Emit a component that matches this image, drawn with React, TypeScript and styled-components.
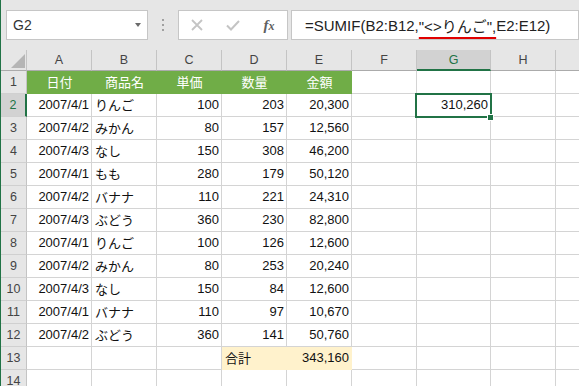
import * as React from 'react';
import styled, { createGlobalStyle } from 'styled-components';

const GREEN = '#217346';
const GRID = '#d4d4d4';

const GlobalStyle = createGlobalStyle`
    body {
        margin: 0;
    }
`;

const Window = styled.div`
    width: 579px;
    height: 386px;
    overflow: hidden;
    box-sizing: border-box;
    border-left: 1px solid ${GREEN};
    background: #e6e6e6;
    font-family: 'Liberation Sans', 'Noto Sans CJK JP', sans-serif;
`;

const FormulaBar = styled.div`
    display: flex;
    height: 50px;
    box-sizing: border-box;
    padding: 10px 0 0 5px;
`;

const NameBox = styled.div`
    width: 142px;
    height: 30px;
    box-sizing: border-box;
    border: 1px solid #c6c6c6;
    background: #fff;
    display: flex;
    align-items: center;
    justify-content: space-between;
    padding: 0 6px;
    font-size: 14px;
    color: #333;
`;

const DropArrow = styled.span`
    width: 0;
    height: 0;
    border-left: 3.5px solid transparent;
    border-right: 3.5px solid transparent;
    border-top: 4px solid #6a6a6a;
`;

const Grip = styled.div`
    width: 30px;
    height: 30px;
    display: flex;
    flex-direction: column;
    align-items: center;
    justify-content: center;
    gap: 3px;

    > span {
        width: 2px;
        height: 2px;
        background: #a0a0a0;
    }
`;

const ButtonBox = styled.div`
    width: 110px;
    height: 30px;
    box-sizing: border-box;
    border: 1px solid #c6c6c6;
    background: #fff;
    display: flex;
`;

const BarButton = styled.div`
    width: 36px;
    display: flex;
    align-items: center;
    justify-content: center;
`;

const Fx = styled.span`
    font-family: 'Liberation Serif', serif;
    font-style: italic;
    font-weight: bold;
    font-size: 15px;
    color: #606060;

    > small {
        font-size: 12px;
    }
`;

const FormulaBox = styled.div`
    flex: 1;
    margin-left: 3px;
    height: 30px;
    box-sizing: border-box;
    border: 1px solid #c6c6c6;
    background: #fff;
    display: flex;
    align-items: center;
    padding-left: 13px;
    font-size: 15px;
    color: #222;
    white-space: nowrap;
`;

const Marked = styled.span`
    text-decoration: underline;
    text-decoration-color: #e00000;
    text-decoration-thickness: 2px;
    text-underline-offset: 5px;
`;

const Sheet = styled.div`
    display: grid;
    grid-template-columns: 26px repeat(6, 65px) 74px 65px 65px;
    grid-template-rows: 21px repeat(14, 23px);
    font-size: 13px;
`;

const Corner = styled.div`
    box-sizing: border-box;
    border-right: 1px solid #c4c4c4;
    border-bottom: 1px solid #ababab;
    display: flex;
    align-items: flex-end;
    justify-content: flex-end;
    padding: 0 1px 2px 0;

    > span {
        width: 14px;
        height: 14px;
        background: #b5b5b5;
        clip-path: polygon(100% 0, 100% 100%, 0 100%);
    }
`;

const ColHeader = styled.div<{ $active?: boolean }>`
    box-sizing: border-box;
    display: flex;
    align-items: center;
    justify-content: center;
    font-size: 12.5px;
    background: ${(p) => (p.$active ? '#d2d2d2' : '#e6e6e6')};
    color: ${(p) => (p.$active ? GREEN : '#444')};
    border-right: 1px solid #c4c4c4;
    border-bottom: ${(p) => (p.$active ? `2px solid ${GREEN}` : '1px solid #ababab')};
`;

const RowHeader = styled.div<{ $active?: boolean }>`
    box-sizing: border-box;
    display: flex;
    align-items: center;
    justify-content: center;
    font-size: 12.5px;
    background: ${(p) => (p.$active ? '#d2d2d2' : '#e6e6e6')};
    color: ${(p) => (p.$active ? GREEN : '#444')};
    border-right: ${(p) => (p.$active ? `2px solid ${GREEN}` : '1px solid #c4c4c4')};
    border-bottom: 1px solid #d0d0d0;
`;

type Tone = 'green' | 'yellow';
type Align = 'left' | 'right' | 'center';

const FILLS: Record<Tone, string> = { green: '#70ad47', yellow: '#fff2cc' };

const Cell = styled.div<{ $align?: Align; $tone?: Tone }>`
    position: relative;
    box-sizing: border-box;
    display: flex;
    align-items: center;
    justify-content: ${(p) =>
        p.$align === 'right' ? 'flex-end' : p.$align === 'center' ? 'center' : 'flex-start'};
    padding: 0 2px 1px 3px;
    white-space: nowrap;
    background: ${(p) => (p.$tone ? FILLS[p.$tone] : '#fff')};
    color: ${(p) => (p.$tone === 'green' ? '#fff' : '#111')};
    border-right: 1px solid ${(p) => (p.$tone ? FILLS[p.$tone] : GRID)};
    border-bottom: 1px solid ${(p) => (p.$tone ? FILLS[p.$tone] : GRID)};
`;

const Selection = styled.div`
    position: absolute;
    left: -2px;
    top: -1px;
    width: 77px;
    height: 25px;
    box-sizing: border-box;
    border: 2px solid ${GREEN};
    z-index: 2;
    pointer-events: none;
`;

const FillHandle = styled.div`
    position: absolute;
    left: 70px;
    top: 19px;
    width: 5px;
    height: 5px;
    background: ${GREEN};
    border: 1px solid #fff;
`;

const COLUMNS = ['A', 'B', 'C', 'D', 'E', 'F', 'G', 'H', 'I'];

const DATA: string[][] = [
    ['2007/4/1', 'りんご', '100', '203', '20,300'],
    ['2007/4/2', 'みかん', '80', '157', '12,560'],
    ['2007/4/3', 'なし', '150', '308', '46,200'],
    ['2007/4/1', 'もも', '280', '179', '50,120'],
    ['2007/4/2', 'バナナ', '110', '221', '24,310'],
    ['2007/4/3', 'ぶどう', '360', '230', '82,800'],
    ['2007/4/1', 'りんご', '100', '126', '12,600'],
    ['2007/4/2', 'みかん', '80', '253', '20,240'],
    ['2007/4/3', 'なし', '150', '84', '12,600'],
    ['2007/4/1', 'バナナ', '110', '97', '10,670'],
    ['2007/4/2', 'ぶどう', '360', '141', '50,760'],
];

const HEADINGS = ['日付', '商品名', '単価', '数量', '金額'];

interface CellData {
    text?: string;
    align?: Align;
    tone?: Tone;
}

const buildRow = (row: number): CellData[] => {
    const cells: CellData[] = COLUMNS.map(() => ({}));
    if (row === 1) {
        HEADINGS.forEach((h, i) => {
            cells[i] = { text: h, align: 'center', tone: 'green' };
        });
    } else if (row <= 12) {
        DATA[row - 2].forEach((v, i) => {
            cells[i] = { text: v, align: i === 1 ? 'left' : 'right' };
        });
        if (row === 2) cells[6] = { text: '310,260', align: 'right' };
    } else if (row === 13) {
        cells[3] = { text: '合計', align: 'left', tone: 'yellow' };
        cells[4] = { text: '343,160', align: 'right', tone: 'yellow' };
    }
    return cells;
};

const ROWS = Array.from({ length: 14 }, (_, i) => i + 1);

const App = (): JSX.Element => (
    <Window>
        <GlobalStyle />
        <FormulaBar>
            <NameBox>
                G2
                <DropArrow />
            </NameBox>
            <Grip>
                <span />
                <span />
                <span />
            </Grip>
            <ButtonBox>
                <BarButton>
                    <svg width="12" height="12" viewBox="0 0 12 12">
                        <path d="M1 1L11 11M11 1L1 11" stroke="#c4c4c4" strokeWidth="1.8" fill="none" />
                    </svg>
                </BarButton>
                <BarButton>
                    <svg width="14" height="11" viewBox="0 0 14 11">
                        <path d="M1 5.5L5 9.5L13 1" stroke="#c4c4c4" strokeWidth="2" fill="none" />
                    </svg>
                </BarButton>
                <BarButton>
                    <Fx>
                        f<small>x</small>
                    </Fx>
                </BarButton>
            </ButtonBox>
            <FormulaBox>
                =SUMIF(B2:B12,<Marked>"&lt;&gt;りんご",</Marked>E2:E12)
            </FormulaBox>
        </FormulaBar>
        <Sheet>
            <Corner>
                <span />
            </Corner>
            {COLUMNS.map((c) => (
                <ColHeader key={c} $active={c === 'G'}>
                    {c}
                </ColHeader>
            ))}
            {ROWS.map((r) => (
                <React.Fragment key={r}>
                    <RowHeader $active={r === 2}>{r}</RowHeader>
                    {buildRow(r).map((cell, i) => (
                        <Cell key={i} $align={cell.align} $tone={cell.tone}>
                            {cell.text}
                            {r === 2 && i === 6 && (
                                <Selection>
                                    <FillHandle />
                                </Selection>
                            )}
                        </Cell>
                    ))}
                </React.Fragment>
            ))}
        </Sheet>
    </Window>
);

export default App;
